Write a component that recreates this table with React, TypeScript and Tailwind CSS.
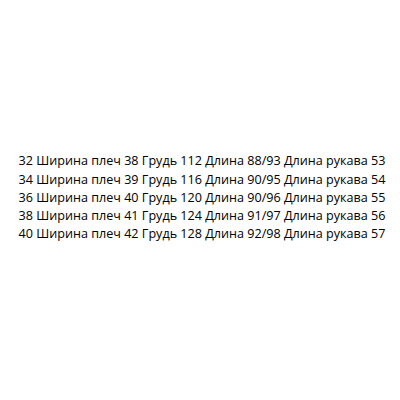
const rows = [
  '32 Ширина плеч 38 Грудь 112 Длина 88/93 Длина рукава 53',
  '34 Ширина плеч 39 Грудь 116 Длина 90/95 Длина рукава 54',
  '36 Ширина плеч 40 Грудь 120 Длина 90/96 Длина рукава 55',
  '38 Ширина плеч 41 Грудь 124 Длина 91/97 Длина рукава 56',
  '40 Ширина плеч 42 Грудь 128 Длина 92/98 Длина рукава 57',
];

export default function App() {
  return (
    <div className="w-[400px] h-[400px] bg-white flex items-center justify-center">
      <div className="text-center text-[12.6px] leading-[18.3px] text-[#000] font-['Open_Sans',sans-serif] ml-[4px] mb-[4px]">
        {rows.map((r) => (
          <div key={r}>{r}</div>
        ))}
      </div>
    </div>
  );
}
